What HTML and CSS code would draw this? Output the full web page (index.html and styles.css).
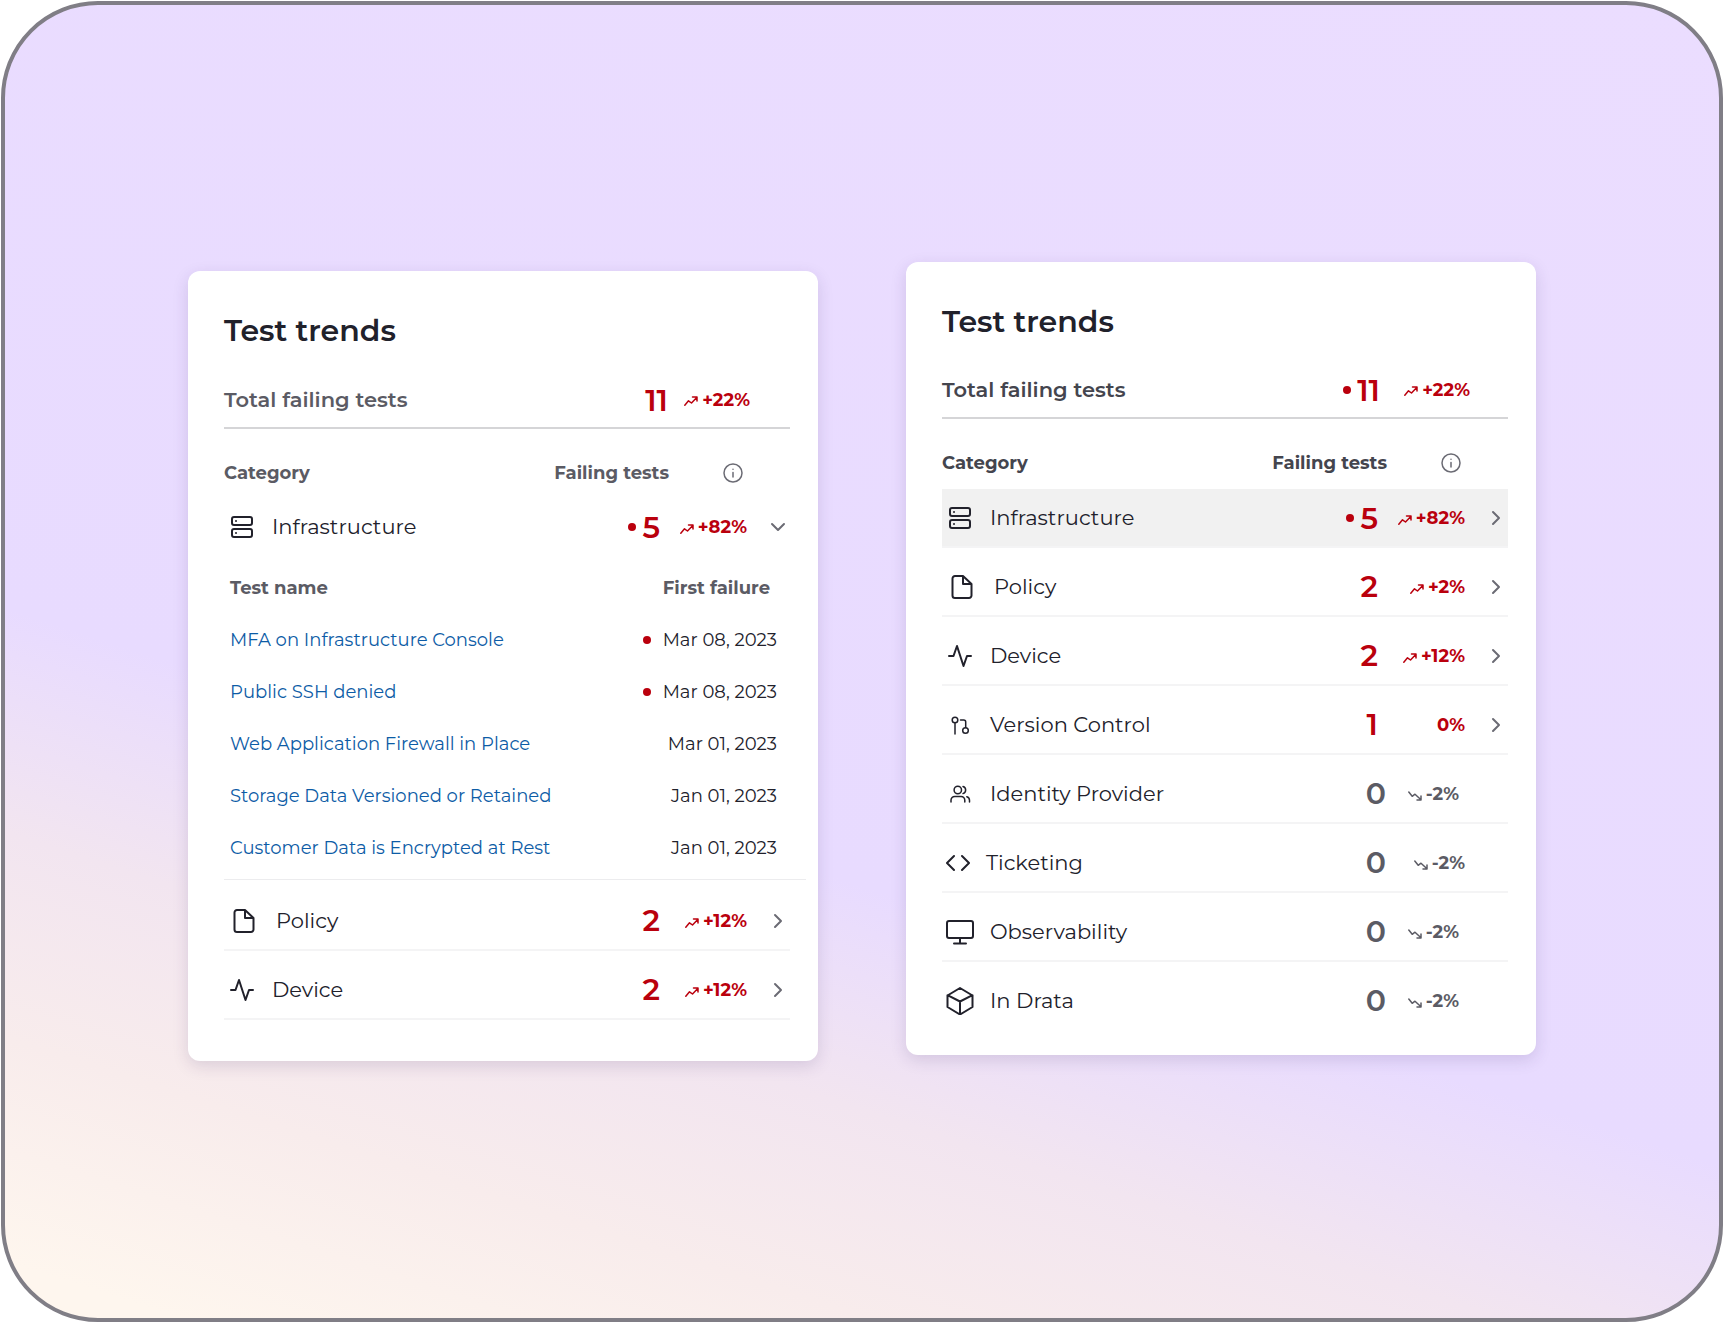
FILE: index.html
```html
<!DOCTYPE html>
<html lang="en">
<head>
<meta charset="utf-8">
<meta name="viewport" content="width=device-width, initial-scale=1">
<title>Test trends</title>
<link rel="stylesheet" href="styles.css">
</head>
<body>
<svg class="sprite" aria-hidden="true">
  <symbol id="server" viewBox="0 0 28 28"><rect x="4" y="4" width="20" height="8" rx="2"/><rect x="4" y="16" width="20" height="8" rx="2"/><path d="M8 8h.01M8 20h.01"/></symbol>
  <symbol id="file" viewBox="0 0 28 28"><path d="M15 3H7a2.500 2.500 0 0 0-2.500 2.500v17A2.500 2.500 0 0 0 7 25h14a2.500 2.500 0 0 0 2.500-2.500V11L15 3v8h8"/></symbol>
  <symbol id="activity" viewBox="0 0 28 28"><path d="M3 14h4.500L11 4l6.500 20L21 14h4"/></symbol>
  <symbol id="branch" viewBox="0 0 28 28"><circle cx="9" cy="9" r="2.800"/><circle cx="19.500" cy="19.500" r="2.800"/><path d="M9 12v11M14.500 9h3.200a2 2 0 0 1 2 2v5.500"/></symbol>
  <symbol id="users" viewBox="0 0 28 28"><circle cx="11.800" cy="10" r="3.700"/><path d="M5 22v-1.800a3.700 3.700 0 0 1 3.700-3.700h6.400a3.700 3.700 0 0 1 3.700 3.700V22M17 6.500a3.700 3.700 0 0 1 0 7.100M23.500 22v-1.800a3.700 3.700 0 0 0-2.700-3.500"/></symbol>
  <symbol id="code" viewBox="0 0 24 28"><path d="M8 7l-7 7 7 7M16 7l7 7-7 7"/></symbol>
  <symbol id="monitor" viewBox="0 0 28 28"><rect x="1" y="3" width="26" height="17" rx="2"/><path d="M14 20v5M8 25.500h12"/></symbol>
  <symbol id="box" viewBox="0 0 28 28"><path d="M26.500 20V8.500L14 1 1.500 8.500V20L14 27.500 26.500 20zM1.500 8.200 14 14.500l12.500-6.300M14 27.500v-13"/></symbol>
  <symbol id="up" viewBox="0 0 14 10"><path d="M.8 9.200l3.700-4.400 3 2.200L13 1.200M8.500 1H13v4"/></symbol>
  <symbol id="down" viewBox="0 0 14 10"><path d="M.8 1l3.400 4.300L7 3.200 13 8.800M9 9h4V5"/></symbol>
  <symbol id="info" viewBox="0 0 20 20"><circle cx="10" cy="10" r="9"/><path d="M10 9.500v4.500M10 6.200v.1"/></symbol>
  <symbol id="chevron" viewBox="0 0 16 16"><path d="M5 2l6 6-6 6"/></symbol>
</svg>
<main class="stage">
  <section class="card card--expanded">
    <h2 class="card__title">Test trends</h2>
    <div class="total">
      <span class="total__label">Total failing tests</span>
      <span class="count">11</span>
      <span class="trend"><svg class="trend__icon"><use href="#up"/></svg>+22%</span>
    </div>
    <table class="grid">
      <thead>
        <tr><th class="name">Category</th><th class="fails">Failing tests</th><th class="trends"><button class="icon-btn info" aria-label="About trends"><svg><use href="#info"/></svg></button></th><th class="action"></th></tr>
      </thead>
      <tbody>
        <tr class="open"><td><span class="cat"><svg class="icon"><use href="#server"/></svg>Infrastructure</span></td><td class="fails"><span class="count count--new">5</span></td><td class="trends"><span class="trend"><svg class="trend__icon"><use href="#up"/></svg>+82%</span></td><td class="action"><button class="icon-btn chevron chevron--down" aria-label="Collapse Infrastructure"><svg><use href="#chevron"/></svg></button></td></tr>
        <tr class="detail"><td colspan="4">
          <table class="tests">
            <thead><tr><th>Test name</th><th class="date">First failure</th></tr></thead>
            <tbody>
              <tr><td><a href="#mfa">MFA on Infrastructure Console</a></td><td class="date"><span class="fresh">Mar 08, 2023</span></td></tr>
              <tr><td><a href="#ssh">Public SSH denied</a></td><td class="date"><span class="fresh">Mar 08, 2023</span></td></tr>
              <tr><td><a href="#waf">Web Application Firewall in Place</a></td><td class="date">Mar 01, 2023</td></tr>
              <tr><td><a href="#storage">Storage Data Versioned or Retained</a></td><td class="date">Jan 01, 2023</td></tr>
              <tr><td><a href="#encryption">Customer Data is Encrypted at Rest</a></td><td class="date">Jan 01, 2023</td></tr>
            </tbody>
          </table>
        </td></tr>
        <tr><td><span class="cat"><svg class="icon icon--wide"><use href="#file"/></svg>Policy</span></td><td class="fails"><span class="count">2</span></td><td class="trends"><span class="trend"><svg class="trend__icon"><use href="#up"/></svg>+12%</span></td><td class="action"><button class="icon-btn chevron" aria-label="Expand Policy"><svg><use href="#chevron"/></svg></button></td></tr>
        <tr><td><span class="cat"><svg class="icon"><use href="#activity"/></svg>Device</span></td><td class="fails"><span class="count">2</span></td><td class="trends"><span class="trend"><svg class="trend__icon"><use href="#up"/></svg>+12%</span></td><td class="action"><button class="icon-btn chevron" aria-label="Expand Device"><svg><use href="#chevron"/></svg></button></td></tr>
      </tbody>
    </table>
  </section>

  <section class="card card--list">
    <h2 class="card__title">Test trends</h2>
    <div class="total">
      <span class="total__label">Total failing tests</span>
      <span class="count count--new">11</span>
      <span class="trend"><svg class="trend__icon"><use href="#up"/></svg>+22%</span>
    </div>
    <table class="grid">
      <thead>
        <tr><th class="name">Category</th><th class="fails">Failing tests</th><th class="trends"><button class="icon-btn info" aria-label="About trends"><svg><use href="#info"/></svg></button></th><th class="action"></th></tr>
      </thead>
      <tbody>
        <tr class="hover"><td><span class="cat"><svg class="icon"><use href="#server"/></svg>Infrastructure</span></td><td class="fails"><span class="count count--new">5</span></td><td class="trends"><span class="trend"><svg class="trend__icon"><use href="#up"/></svg>+82%</span></td><td class="action"><button class="icon-btn chevron" aria-label="Expand Infrastructure"><svg><use href="#chevron"/></svg></button></td></tr>
        <tr><td><span class="cat"><svg class="icon icon--wide"><use href="#file"/></svg>Policy</span></td><td class="fails"><span class="count">2</span></td><td class="trends"><span class="trend"><svg class="trend__icon"><use href="#up"/></svg>+2%</span></td><td class="action"><button class="icon-btn chevron" aria-label="Expand Policy"><svg><use href="#chevron"/></svg></button></td></tr>
        <tr><td><span class="cat"><svg class="icon"><use href="#activity"/></svg>Device</span></td><td class="fails"><span class="count">2</span></td><td class="trends"><span class="trend"><svg class="trend__icon"><use href="#up"/></svg>+12%</span></td><td class="action"><button class="icon-btn chevron" aria-label="Expand Device"><svg><use href="#chevron"/></svg></button></td></tr>
        <tr><td><span class="cat"><svg class="icon icon--fine"><use href="#branch"/></svg>Version Control</span></td><td class="fails"><span class="count">1</span></td><td class="trends"><span class="trend">0%</span></td><td class="action"><button class="icon-btn chevron" aria-label="Expand Version Control"><svg><use href="#chevron"/></svg></button></td></tr>
        <tr class="idle"><td><span class="cat"><svg class="icon icon--fine"><use href="#users"/></svg>Identity Provider</span></td><td class="fails"><span class="count">0</span></td><td class="trends"><span class="trend"><svg class="trend__icon"><use href="#down"/></svg>-2%</span></td><td></td></tr>
        <tr class="idle"><td><span class="cat"><svg class="icon icon--narrow"><use href="#code"/></svg>Ticketing</span></td><td class="fails"><span class="count">0</span></td><td class="trends trends--edge"><span class="trend"><svg class="trend__icon"><use href="#down"/></svg>-2%</span></td><td></td></tr>
        <tr class="idle"><td><span class="cat"><svg class="icon"><use href="#monitor"/></svg>Observability</span></td><td class="fails"><span class="count">0</span></td><td class="trends"><span class="trend"><svg class="trend__icon"><use href="#down"/></svg>-2%</span></td><td></td></tr>
        <tr class="idle"><td><span class="cat"><svg class="icon"><use href="#box"/></svg>In Drata</span></td><td class="fails"><span class="count">0</span></td><td class="trends"><span class="trend"><svg class="trend__icon"><use href="#down"/></svg>-2%</span></td><td></td></tr>
      </tbody>
    </table>
  </section>
</main>
</body>
</html>
```
FILE: styles.css
```css
:root {
  --ink: #21212b;
  --muted: #5b5b64;
  --red: #ba000d;
  --link: #0d5ca6;
  --line: #f4f4f5;
  --rule: #d5d5d7;
}

* { box-sizing: border-box; }

body {
  margin: 0;
  padding: 1px;
  background: #fff;
  color: var(--ink);
  font-family: Montserrat, Inter, "Open Sans", sans-serif;
  font-size: 18px;
  line-height: 28px;
}

.sprite { position: absolute; width: 0; height: 0; }

svg {
  display: block;
  fill: none;
  stroke: currentColor;
  stroke-width: 2;
  stroke-linecap: round;
  stroke-linejoin: round;
}

.stage {
  display: flex;
  justify-content: center;
  align-items: flex-start;
  gap: 88px;
  min-height: calc(100vh - 2px);
  padding: 257px 24px 24px;
  border: 4px solid #807e86;
  border-radius: 97px;
  background: linear-gradient(198deg, #ebddff 0%, #e8dbff 62%, #f2e5f0 74%, #f8ecec 85%, #fef6ee 97%);
}

.card {
  flex: 0 1 630px;
  padding: 40px 28px 24px 36px;
  border-radius: 12px;
  background: #fff;
  box-shadow: 0 5px 16px rgba(60, 40, 100, .15);
}

.card--expanded { margin-top: 9px; padding-bottom: 41px; }

.card__title {
  margin: 0;
  font-size: 30px;
  font-weight: 600;
  line-height: 40px;
}

.total {
  display: flex;
  align-items: center;
  height: 60px;
  margin-top: 17px;
  padding-top: 4px;
  border-bottom: 2px solid var(--rule);
}
.card--expanded .total { margin-top: 18px; }

.total__label {
  flex: 1;
  color: var(--muted);
  font-size: 21px;
  font-weight: 600;
}
.card--list .total__label, .card--list th { color: #44454e; }

.total .trend { width: 90px; margin-right: 38px; }
.card--expanded .total .trend { width: 82px; margin-right: 40px; }

.count {
  display: inline-flex;
  align-items: center;
  padding-top: 2px;
  color: var(--red);
  font-size: 30px;
  font-weight: 600;
  line-height: 32px;
}
.count--new::before {
  width: 8px;
  height: 8px;
  margin-right: 6px;
  margin-bottom: 2px;
  border-radius: 50%;
  background: var(--red);
  content: "";
}

.trend {
  display: flex;
  justify-content: flex-end;
  align-items: center;
  gap: 4px;
  color: var(--red);
  font-size: 18px;
  font-weight: 700;
}
.trend__icon { width: 14px; height: 10px; margin-top: 4px; stroke-width: 1.500; }
.total .trend__icon { margin-top: 2px; }

table { width: 100%; border-collapse: separate; border-spacing: 0; }
th, td { padding: 0; font-weight: 400; text-align: left; }
th { color: var(--muted); font-size: 18px; font-weight: 700; }

.grid { table-layout: fixed; }
.grid > thead th { height: 70px; padding-top: 18px; }
.grid > tbody > tr > td { height: 69px; padding-top: 10px; border-bottom: 2px solid var(--line); }
.grid > tbody > tr.hover > td { height: 59px; padding-top: 0; background: #f1f1f1; }
.grid > tbody > tr.open > td { height: 58px; padding-top: 0; border-bottom-color: transparent; }
.grid > tbody > tr:last-child.idle > td { border-bottom-color: transparent; }
.grid > tbody > tr.detail > td { height: auto; padding: 0 0 2px; border: 0; }

.grid .fails { width: 130px; padding-right: 9px; text-align: right; }
.grid > thead .fails { padding-right: 0; white-space: nowrap; }
.grid .trends { width: 78px; }
.grid .action { width: 43px; }
.grid .idle .fails { padding-right: 1px; }
.grid .idle .trends { padding-right: 6px; }
.grid .idle .trends--edge { padding-right: 0; }
.idle .count, .idle .trend { color: var(--muted); }

.cat {
  display: flex;
  align-items: center;
  gap: 16px;
  padding-left: 4px;
  font-size: 21px;
}
.icon { flex: none; width: 28px; height: 28px; }
.icon--wide { width: 32px; }
.icon--narrow { width: 24px; }
.icon--fine { stroke-width: 1.500; }

.icon-btn {
  display: flex;
  padding: 0;
  border: 0;
  background: none;
  color: #6b6b74;
  cursor: pointer;
}
.info { margin-right: 4px; margin-left: auto; }
.info svg { width: 20px; height: 20px; stroke-width: 1.500; }
.chevron { margin-left: auto; margin-right: 4px; }
.chevron svg { width: 16px; height: 16px; }
.chevron--down svg { transform: rotate(90deg); }

.tests { width: calc(100% + 16px); padding: 5px 0 5px 6px; border-bottom: 1px solid #ececee; }
.tests th, .tests td { height: 52px; }
.tests .date { padding-right: 29px; text-align: right; }
.tests th.date { padding-right: 36px; }
.tests a { color: var(--link); text-decoration: none; }
.fresh { display: flex; justify-content: flex-end; align-items: center; gap: 12px; }
.fresh::before { width: 8px; height: 8px; border-radius: 50%; background: var(--red); content: ""; }
```
